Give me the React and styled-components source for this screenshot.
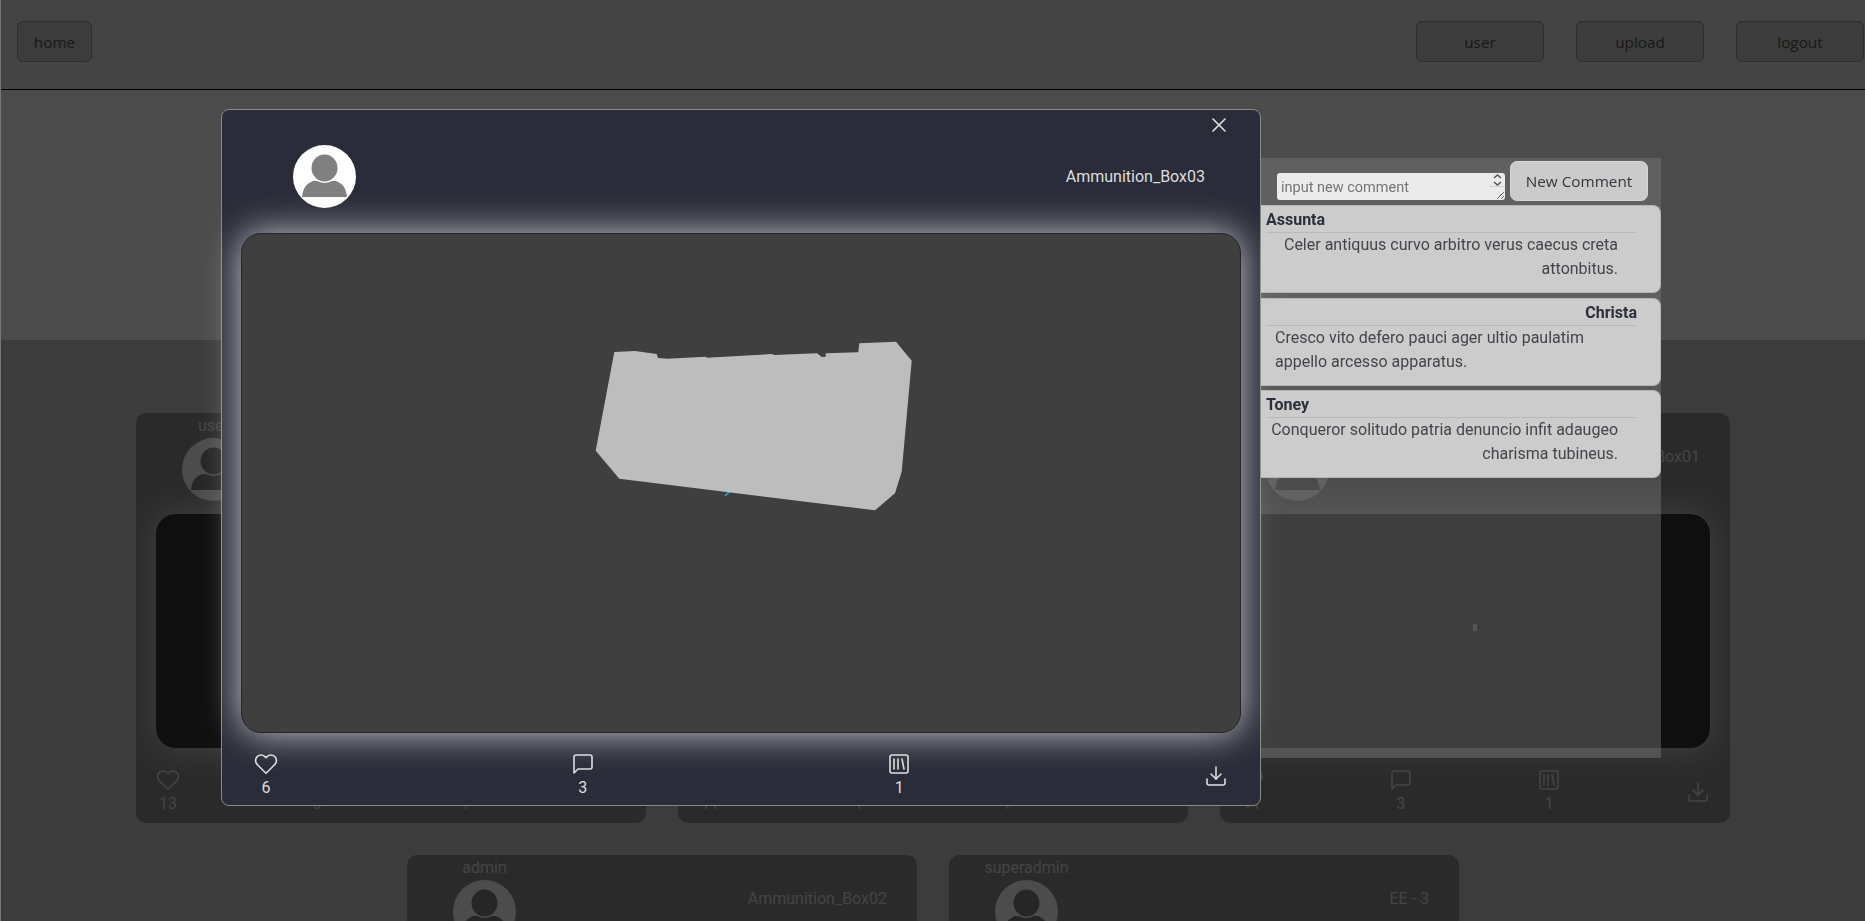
import React from "react";
import styled, { createGlobalStyle } from "styled-components";
import { Download, LibrarySquare, X } from "lucide-react";

const GlobalStyle = createGlobalStyle`
  html, body {
    margin: 0;
    height: 100%;
    overflow: hidden;
    background: #777777;
    font-family: Roboto, sans-serif;
  }
  * {
    box-sizing: border-box;
  }
`;

const cards = [
  { user: "user", title: "Ammunition_Box04", likes: 13, comments: 6, saves: 1 },
  { user: "admin", title: "Ammunition_Box05", likes: 11, comments: 1, saves: 1 },
  { user: "user", title: "Ammunition_Box01", likes: 11, comments: 3, saves: 1, speck: true },
  { user: "admin", title: "Ammunition_Box02", likes: 4, comments: 2, saves: 1 },
  { user: "superadmin", title: "EE - 3", likes: 2, comments: 5, saves: 0 },
];

const comments = [
  {
    name: "Assunta",
    text: "Celer antiquus curvo arbitro verus caecus creta attonbitus.",
    mine: false,
  },
  {
    name: "Christa",
    text: "Cresco vito defero pauci ager ultio paulatim appello arcesso apparatus.",
    mine: true,
  },
  {
    name: "Toney",
    text: "Conqueror solitudo patria denuncio infit adaugeo charisma tubineus.",
    mine: false,
  },
];

const Page = styled.div`
  margin-left: 1px;
  height: 921px;
  overflow: hidden;
  background: #fafafa;
`;

const NavBar = styled.nav`
  height: 90px;
  padding: 21px 1px 0 16px;
  display: flex;
  justify-content: space-between;
  align-items: flex-start;
  background: #e3e3e3;
  border-bottom: 1px solid #000;
`;

const NavGroup = styled.div`
  display: flex;
  gap: 32px;
`;

const NavButton = styled.button`
  width: ${(p) => p.$width || 128}px;
  height: 41px;
  padding: 0;
  border: 1px solid #999;
  border-radius: 6px;
  background: #c8c8c8;
  color: #555;
  font-family: "Open Sans", sans-serif;
  font-size: 15.3px;
`;

const Hero = styled.div`
  height: 250px;
`;

const Gallery = styled.section`
  display: flex;
  flex-wrap: wrap;
  justify-content: center;
  gap: 32px;
  padding-top: 73px;
  min-height: 600px;
  background: #c8c8c8;
`;

const Card = styled.article`
  width: 510px;
  height: 410px;
  padding: 0 20px;
  border-radius: 10px;
  background: #8c8c8c;
  color: #e3e3e3;
`;

const CardHead = styled.header`
  height: 101px;
  padding: 0 10px 0 26px;
  display: flex;
  justify-content: space-between;
  align-items: flex-start;
`;

const Author = styled.div`
  width: 63px;
  display: flex;
  flex-direction: column;
  align-items: center;
  line-height: 25px;
  font-size: 16px;
`;

const Title = styled.div`
  padding-top: 34px;
  line-height: 20px;
  font-size: 16px;
`;

const CardCanvas = styled.div`
  height: 234px;
  display: flex;
  align-items: center;
  justify-content: center;
  border-radius: 20px;
  background: #323232;
  box-shadow: 0 0 36px rgba(255, 255, 255, 0.75);
`;

const Speck = styled.span`
  width: 4px;
  height: 7px;
  margin-bottom: 8px;
  background: #bbb;
`;

const Actions = styled.footer`
  display: flex;
  justify-content: space-between;
  align-items: center;
  margin-top: ${(p) => p.$top}px;
  padding: 0 ${(p) => p.$side}px;
`;

const Action = styled.div`
  width: 24px;
  display: flex;
  flex-direction: column;
  align-items: center;
  font-size: 16px;
  line-height: 24px;
`;

const AvatarCircle = styled.svg`
  width: 63px;
  height: 63px;
  display: block;
  flex: none;
`;

const ActionGlyph = styled.svg`
  width: 24px;
  height: 24px;
  display: block;
  fill: none;
  stroke: currentColor;
  stroke-width: 1.6;
  stroke-linecap: round;
  stroke-linejoin: round;
`;

const Backdrop = styled.div`
  position: fixed;
  inset: 0 0 0 1px;
  padding: 109px 0 0 220px;
  display: flex;
  align-items: flex-start;
  background: rgba(0, 0, 0, 0.7);
`;

const Modal = styled.div`
  position: relative;
  width: 1040px;
  height: 697px;
  flex: none;
  border: 1px solid #8a8a8a;
  border-radius: 8px;
  background: #2a2c39;
  color: #dedede;
`;

const CloseButton = styled.button`
  position: absolute;
  top: 3px;
  right: 29px;
  width: 24px;
  height: 24px;
  padding: 0;
  border: 0;
  background: none;
  color: #e4e4e4;
`;

const ModalHead = styled.header`
  height: 123px;
  padding: 35px 55px 0 71px;
  display: flex;
  justify-content: space-between;
  align-items: flex-start;
`;

const ModalTitle = styled.div`
  padding-top: 22px;
  line-height: 20px;
  font-size: 16px;
`;

const Viewer = styled.div`
  width: 1000px;
  height: 500px;
  margin: 0 19px;
  border: 1px solid #23252f;
  border-radius: 20px;
  overflow: hidden;
  background: #3f3f3f;
  box-shadow: 0 0 36px rgba(255, 255, 255, 0.75);
`;

const ModelDrawing = styled.svg`
  display: block;
  width: 998px;
  height: 498px;
`;

const CommentPanel = styled.aside`
  position: relative;
  width: 400px;
  height: 600px;
  flex: none;
  margin-top: 49px;
  background: rgba(125, 125, 125, 0.43);
`;

const CommentForm = styled.form`
  display: flex;
  align-items: flex-end;
  gap: 5px;
  padding: 3px 0 4px 16px;
`;

const InputWrap = styled.div`
  position: relative;
  height: 27px;
  margin-bottom: 1px;
`;

const CommentInput = styled.textarea`
  display: block;
  width: 228px;
  height: 27px;
  padding: 6px 4px 0;
  border: 0;
  border-radius: 3px;
  outline: 0;
  overflow-y: scroll;
  background: #ebebeb;
  color: #333;
  font-family: Roboto, sans-serif;
  font-size: 14.5px;
  line-height: 18px;
  &::placeholder {
    color: #757575;
  }
  &::-webkit-scrollbar {
    width: 15px;
    background: #fff;
  }
`;

const ScrollArrows = styled.svg`
  position: absolute;
  top: 0;
  right: 0;
  width: 15px;
  height: 14px;
  pointer-events: none;
`;

const NewCommentButton = styled.button`
  width: 138px;
  height: 40px;
  padding: 0;
  border: 1px solid #d6d6d6;
  border-radius: 7px;
  background: #cbcbcb;
  color: #33343c;
  font-family: "Open Sans", sans-serif;
  font-size: 15.3px;
`;

const CommentList = styled.div`
  display: flex;
  flex-direction: column;
  gap: 4.5px;
`;

const CommentItem = styled.div`
  height: 88px;
  padding: 2px 23px 0 5px;
  border: 1px solid #b5b5b5;
  border-left: 0;
  border-radius: 0 8px 8px 0;
  background: #cccccc;
  color: #2b2e3b;
`;

const CommentName = styled.div`
  height: 25px;
  line-height: 23px;
  border-bottom: 1px solid #b9b9b9;
  font-size: 16px;
  font-weight: 700;
  text-align: ${(p) => (p.$mine ? "right" : "left")};
`;

const CommentText = styled.p`
  margin: 0;
  padding: ${(p) => (p.$mine ? "0 19px 0 9px" : "0 19px 0 0")};
  color: #44454c;
  font-size: 16px;
  line-height: 24px;
  text-align: ${(p) => (p.$mine ? "left" : "right")};
`;

const Avatar = () => (
  <AvatarCircle viewBox="0 0 63 63">
    <circle cx="31.5" cy="31.5" r="31.5" fill="#fff" />
    <path d="M9 52 C10 43 13 39 20 36 L43 36 C50 39 53 43 54 52 Z" fill="#808080" />
    <circle cx="31.5" cy="23" r="15" fill="#fff" />
    <ellipse cx="31.5" cy="23" rx="13" ry="13.5" fill="#808080" />
  </AvatarCircle>
);

const ActionRow = ({ likes, comments: count, saves, top, side }) => (
  <Actions $top={top} $side={side}>
    <Action>
      <ActionGlyph viewBox="0 0 24 24">
        <path d="M20.84 4.61a5.5 5.5 0 0 0-7.78 0L12 5.67l-1.06-1.06a5.5 5.5 0 0 0-7.78 7.78l1.06 1.06L12 21.23l7.78-7.78 1.06-1.06a5.5 5.5 0 0 0 0-7.78z" />
      </ActionGlyph>
      {likes}
    </Action>
    <Action>
      <ActionGlyph viewBox="0 0 24 24">
        <path d="M21 15a2 2 0 0 1-2 2H7l-4 4V5a2 2 0 0 1 2-2h14a2 2 0 0 1 2 2z" />
      </ActionGlyph>
      {count}
    </Action>
    <Action>
      <LibrarySquare size={24} strokeWidth={1.6} />
      {saves}
    </Action>
    <Action>
      <Download size={24} strokeWidth={1.6} />
    </Action>
  </Actions>
);

const App = () => {
  return (
    <>
      <GlobalStyle />
      <Page>
        <NavBar>
          <NavButton $width={75}>home</NavButton>
          <NavGroup>
            <NavButton>user</NavButton>
            <NavButton>upload</NavButton>
            <NavButton>logout</NavButton>
          </NavGroup>
        </NavBar>
        <Hero />
        <Gallery>
          {cards.map((card, i) => (
            <Card key={i}>
              <CardHead>
                <Author>
                  {card.user}
                  <Avatar />
                </Author>
                <Title>{card.title}</Title>
              </CardHead>
              <CardCanvas>{card.speck && <Speck />}</CardCanvas>
              <ActionRow
                likes={card.likes}
                comments={card.comments}
                saves={card.saves}
                top={20}
                side={0}
              />
            </Card>
          ))}
        </Gallery>
      </Page>

      <Backdrop>
        <Modal>
          <CloseButton>
            <X size={24} strokeWidth={1.6} />
          </CloseButton>
          <ModalHead>
            <Avatar />
            <ModalTitle>Ammunition_Box03</ModalTitle>
          </ModalHead>
          <Viewer>
            <ModelDrawing viewBox="242 234 998 498">
              <path
                d="M725 496 L730 491"
                stroke="#2aa8e0"
                strokeWidth="1.5"
                fill="none"
              />
              <polygon
                fill="#bdbdbd"
                points="614.3,352 635,351 656.7,354 658,358 667,358.7 706,356.7 706.7,357.7 771.7,354 774.3,355 817,353.3 821.7,357 825.7,356.7 825.7,353.3 858.3,352.3 859.3,343.3 896,341.7 911.7,360.7 901.7,471.7 895,493.3 875,510.3 619.3,478.7 595.7,450.7"
              />
            </ModelDrawing>
          </Viewer>
          <ActionRow likes={6} comments={3} saves={1} top={19} side={32} />
        </Modal>

        <CommentPanel>
          <CommentForm>
            <InputWrap>
              <CommentInput placeholder="input new comment" />
              <ScrollArrows viewBox="0 0 15 14">
                <path
                  d="M4 5 L7.5 2 L11 5 M4 9 L7.5 12 L11 9"
                  fill="none"
                  stroke="#555"
                  strokeWidth="1.6"
                />
                <path d="M0 13.5 H15" stroke="#cfcfcf" strokeWidth="1" />
              </ScrollArrows>
            </InputWrap>
            <NewCommentButton type="button">New Comment</NewCommentButton>
          </CommentForm>
          <CommentList>
            {comments.map((comment) => (
              <CommentItem key={comment.name}>
                <CommentName $mine={comment.mine}>{comment.name}</CommentName>
                <CommentText $mine={comment.mine}>{comment.text}</CommentText>
              </CommentItem>
            ))}
          </CommentList>
        </CommentPanel>
      </Backdrop>
    </>
  );
};

export default App;
